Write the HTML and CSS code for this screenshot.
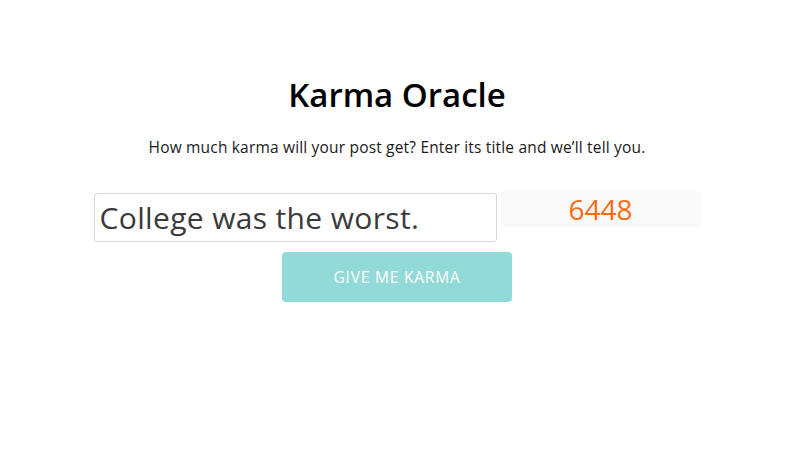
FILE: index.html
```html
<!DOCTYPE html>
<html>
<head>
<meta charset="utf-8">
<link rel="stylesheet" href="styles.css">
</head>
<body>
<main class="page">
  <h1 class="title">Karma Oracle</h1>
  <p class="subtitle">How much karma will your post get? Enter its title and we’ll tell you.</p>
  <div class="row">
    <div class="input">College was the worst.</div>
    <div class="result">6448</div>
  </div>
  <button class="btn">GIVE ME KARMA</button>
</main>
</body>
</html>
```

FILE: styles.css
```css
html, body {
  margin: 0;
  padding: 0;
  background: #fff;
}
body {
  font-family: "Open Sans", "Liberation Sans", sans-serif;
  color: #111;
}
.page {
  display: flex;
  flex-direction: column;
  align-items: center;
  padding-top: 74px;
  padding-left: 2px;
}
.title {
  margin: 0;
  font-size: 33px;
  font-weight: 600;
  line-height: 42px;
  color: #000;
}
.subtitle {
  margin: 20px 0 0;
  font-size: 15.5px;
  line-height: 22px;
  letter-spacing: 0.18px;
  color: #1a1a1a;
}
.row {
  margin-top: 35px;
  display: flex;
  align-items: flex-start;
  gap: 4px;
}
.input {
  box-sizing: border-box;
  width: 403px;
  height: 49px;
  border: 1px solid #d9d9d9;
  border-radius: 3px;
  padding: 0 5px;
  font-size: 30px;
  line-height: 47px;
  letter-spacing: 0.35px;
  color: #3a3a3a;
  white-space: nowrap;
}
.result {
  box-sizing: border-box;
  width: 200px;
  height: 36px;
  margin-top: -2px;
  background: #f9f9f9;
  border-radius: 4px;
  text-align: center;
  font-size: 28px;
  line-height: 36px;
  color: #ff6a10;
}
.btn {
  margin-top: 10px;
  width: 230px;
  height: 50px;
  border: none;
  border-radius: 4px;
  background: #92dad7;
  color: #fff;
  font-family: inherit;
  font-size: 15.5px;
  letter-spacing: 0.8px;
  padding: 0;
}
```
